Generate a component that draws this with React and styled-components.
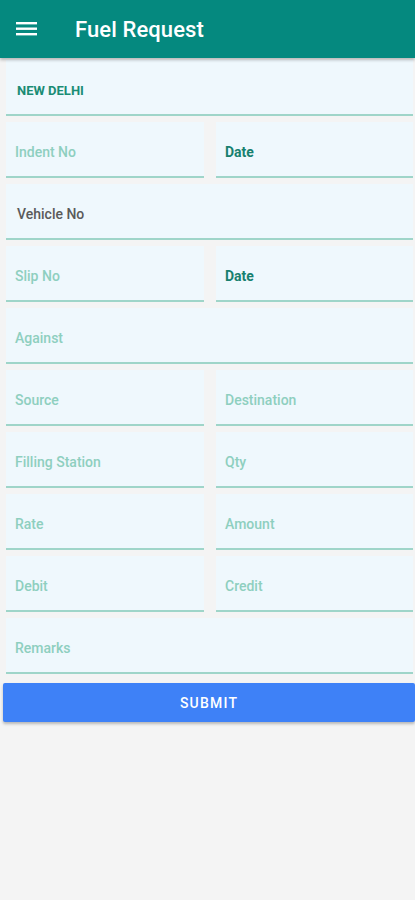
import { styled, createGlobalStyle } from "styled-components";

const GlobalStyle = createGlobalStyle`
  html, body {
    margin: 0;
    padding: 0;
    background-color: #f4f4f4;
    font-family: Roboto, "Liberation Sans", sans-serif;
  }
`;

const rows = [
  [{ label: "NEW DELHI", kind: "city" }],
  [{ label: "Indent No" }, { label: "Date", kind: "date" }],
  [{ label: "Vehicle No", kind: "value" }],
  [{ label: "Slip No" }, { label: "Date", kind: "date" }],
  [{ label: "Against" }],
  [{ label: "Source" }, { label: "Destination" }],
  [{ label: "Filling Station" }, { label: "Qty" }],
  [{ label: "Rate" }, { label: "Amount" }],
  [{ label: "Debit" }, { label: "Credit" }],
  [{ label: "Remarks" }],
];

function App() {
  return (
    <Page>
      <GlobalStyle />
      <Toolbar>
        <MenuButton aria-label="menu">
          <svg width="22" height="18" viewBox="0 0 22 18">
            <rect x="0" y="2" width="21" height="2.4" fill="#fff" />
            <rect x="0" y="7.5" width="21" height="2.4" fill="#fff" />
            <rect x="0" y="13" width="21" height="2.4" fill="#fff" />
          </svg>
        </MenuButton>
        <Title>Fuel Request</Title>
      </Toolbar>
      <Form>
        {rows.map((row, i) => (
          <Row key={i} $cols={row.length}>
            {row.map((field, j) => (
              <Field key={j}>
                <Label $kind={field.kind}>{field.label}</Label>
              </Field>
            ))}
          </Row>
        ))}
        <SubmitButton>SUBMIT</SubmitButton>
      </Form>
    </Page>
  );
}

const Page = styled.div`
  min-height: 900px;
  background-color: #f4f4f4;
`;
const Toolbar = styled.header`
  height: 58px;
  background-color: #05897f;
  display: flex;
  align-items: center;
  box-shadow: 0 2px 3px rgba(0, 0, 0, 0.25);
  position: relative;
  z-index: 1;
`;
const MenuButton = styled.div`
  width: 22px;
  height: 18px;
  margin-left: 16px;
  display: flex;
`;
const Title = styled.h1`
  margin: 0 0 0 37px;
  color: #fff;
  font-size: 22px;
  font-weight: 500;
  letter-spacing: 0.1px;
`;
const Form = styled.div`
  display: flex;
  flex-direction: column;
  gap: 6px;
  padding: 2px 2px 0 6px;
`;
const Row = styled.div`
  display: grid;
  grid-template-columns: ${p => (p.$cols === 2 ? "198px 1fr" : "1fr")};
  column-gap: 12px;
`;
const Field = styled.div`
  height: 56px;
  box-sizing: border-box;
  background-color: #eff8fd;
  border-bottom: 2px solid #9fd5c9;
  display: flex;
  align-items: center;
  padding: 6px 0 0 9px;
`;
const Label = styled.span`
  font-size: ${p => (p.$kind === "city" ? "13px" : "14px")};
  font-weight: ${p => (p.$kind === "date" || p.$kind === "city" ? 700 : 500)};
  color: ${p =>
    p.$kind === "date"
      ? "#18806f"
      : p.$kind === "city"
      ? "#1a8c74"
      : p.$kind === "value"
      ? "#5a5a5a"
      : "#8ecfbf"};
  margin-left: ${p => (p.$kind === "city" || p.$kind === "value" ? "2px" : "0")};
`;
const SubmitButton = styled.button`
  margin: 3px -2px 0 -3px;
  height: 39px;
  border: none;
  border-radius: 2px;
  background-color: #3e81f7;
  color: #fff;
  font-family: Roboto, "Liberation Sans", sans-serif;
  font-size: 14px;
  font-weight: 500;
  letter-spacing: 1.2px;
  box-shadow: 0 2px 3px rgba(0, 0, 0, 0.25);
  cursor: pointer;
`;

export default App;
